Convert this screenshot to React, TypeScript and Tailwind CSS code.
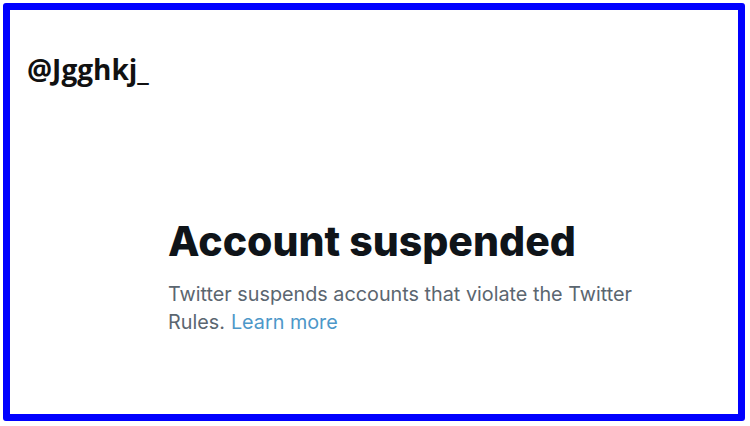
export default function App() {
  return (
    <div className="h-[426px] w-[750px] bg-white pl-[3px] pt-[3px]">
      <div className="flex h-[418px] w-[742px] flex-col rounded-[3px] border-[7px] border-[#0000ff] bg-white">
        <div className="pl-[17px] pt-[42px] font-['Open_Sans',sans-serif] text-[28px] leading-[34px] font-bold text-[#111]">
          @Jgghkj_
        </div>
        <div className="ml-[158px] mt-[131px] flex flex-col">
          <h1 className="font-['Inter',sans-serif] text-[41px] leading-[48px] font-extrabold text-[#0f1419]">
            Account suspended
          </h1>
          <div className="mt-[15px] flex flex-col font-['Inter',sans-serif] text-[19.8px] leading-[28px] text-[#5b6670]">
            <p>Twitter suspends accounts that violate the Twitter</p>
            <p className="flex gap-[6px]">
              <span>Rules.</span>
              <span className="text-[#4d98c9]">Learn more</span>
            </p>
          </div>
        </div>
      </div>
    </div>
  );
}
